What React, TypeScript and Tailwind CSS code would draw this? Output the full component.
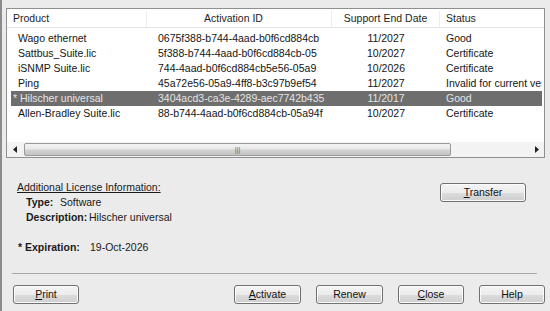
import React from "react";

const rows = [
  { p: "Wago ethernet", id: "0675f388-b744-4aad-b0f6cd884cb", d: "11/2027", s: "Good" },
  { p: "Sattbus_Suite.lic", id: "5f388-b744-4aad-b0f6cd884cb-05", d: "10/2027", s: "Certificate" },
  { p: "iSNMP Suite.lic", id: "744-4aad-b0f6cd884cb5e56-05a9", d: "10/2026", s: "Certificate" },
  { p: "Ping", id: "45a72e56-05a9-4ff8-b3c97b9ef54", d: "11/2027", s: "Invalid for current ver" },
  { p: "* Hilscher universal", id: "3404acd3-ca3e-4289-aec7742b435", d: "11/2017", s: "Good", sel: true },
  { p: "Allen-Bradley Suite.lic", id: "88-b744-4aad-b0f6cd884cb-05a94f", d: "10/2027", s: "Certificate" },
];

function Btn({ children, w }: { children: React.ReactNode; w: string }) {
  return (
    <div
      className={`${w} h-[19px] flex items-center justify-center rounded-[3px] border border-[#707070] bg-[linear-gradient(#f4f4f4_0%,#ececec_50%,#dcdcdc_51%,#cfcfcf_100%)] shadow-[inset_0_0_0_1px_#fbfbfb] text-[#111] text-[10.5px]`}
    >
      {children}
    </div>
  );
}

export default function App() {
  return (
    <div
      className="w-[550px] h-[311px] bg-[#ebebeb] border-l-2 border-[#8c8c8c] overflow-hidden text-[10px] text-[#1a1a1a]"
      style={{ fontFamily: '"Liberation Sans", Arial, sans-serif' }}
    >
      {/* list box */}
      <div className="mt-[8px] ml-[4px] w-[539px] h-[150px] border border-[#8e8f8f] bg-white flex flex-col">
        {/* header */}
        <div className="h-[19px] pt-[2px] flex items-center border-b border-[#e4e4e4] text-[#1e1e1e] text-[10.5px]">
          <div className="w-[140px] pl-[6px] border-r border-[#ececec] h-full flex items-center">Product</div>
          <div className="w-[185px] pl-[57px] border-r border-[#ececec] h-full flex items-center">Activation ID</div>
          <div className="w-[108px] border-r border-[#ececec] h-full flex items-center justify-center">Support End Date</div>
          <div className="flex-1 pl-[6px] h-full flex items-center">Status</div>
        </div>
        {/* rows */}
        <div className="flex-1 pt-[3px] pl-[4px] pr-[2px] flex flex-col">
          {rows.map((r) => (
            <div
              key={r.p}
              className={`h-[15px] flex items-center whitespace-nowrap overflow-hidden text-[10.5px] ${
                r.sel ? "bg-[#6e6e6e] text-[#e4e4e4]" : "text-[#151515]"
              }`}
            >
              <div className={`w-[136px] ${r.sel ? "pl-[2px]" : "pl-[7px]"}`}>{r.p}</div>
              <div className="w-[185px] pl-[11px]">{r.id}</div>
              <div className="w-[108px] text-center">{r.d}</div>
              <div className="flex-1 pl-[6px] overflow-hidden">{r.s}</div>
            </div>
          ))}
        </div>
        {/* scrollbar */}
        <div className="h-[15px] flex items-center bg-[#f3f3f3]">
          <div className="w-[15px] h-full flex items-center justify-center">
            <svg width="4" height="7" viewBox="0 0 4 7">
              <path d="M4 0 L0 3.5 L4 7 Z" fill="#222" />
            </svg>
          </div>
          <div className="ml-[2px] w-[427px] h-[13px] rounded-[2px] border border-[#9a9a9a] bg-[linear-gradient(#f4f4f4_0%,#e8e8e8_45%,#d2d2d2_55%,#c4c4c4_100%)] flex items-center justify-center">
            <span className="text-[7px] leading-none text-[#666]">|||</span>
          </div>
          <div className="flex-1" />
          <div className="w-[15px] h-full flex items-center justify-center">
            <svg width="4" height="7" viewBox="0 0 4 7">
              <path d="M0 0 L4 3.5 L0 7 Z" fill="#222" />
            </svg>
          </div>
        </div>
      </div>

      {/* info area */}
      <div className="mt-[23px] flex">
        <div className="ml-[15px] flex flex-col text-[10.5px]">
          <div className="h-[12px] leading-[12px] underline">Additional License Information:</div>
          <div className="mt-[3px] h-[12px] leading-[12px] pl-[9px] flex">
            <span className="font-bold w-[34px]">Type:</span>
            <span>Software</span>
          </div>
          <div className="mt-[3px] h-[12px] leading-[12px] pl-[9px] flex">
            <span className="font-bold w-[63px]">Description:</span>
            <span>Hilscher universal</span>
          </div>
          <div className="mt-[18px] h-[12px] leading-[12px] pl-[1px] flex">
            <span className="font-bold w-[72px]">* Expiration:</span>
            <span>19-Oct-2026</span>
          </div>
        </div>
        <div className="ml-auto mr-[24px] mt-[2px]">
          <Btn w="w-[86px]">
            <span>
              <u>T</u>ransfer
            </span>
          </Btn>
        </div>
      </div>

      {/* separator */}
      <div className="mt-[20px] ml-[10px] w-[525px] h-[1px] bg-[#a8a8a8]" />

      {/* buttons */}
      <div className="mt-[11px] ml-[11px] flex">
        <Btn w="w-[66px]">
          <span>
            <u>P</u>rint
          </span>
        </Btn>
        <div className="ml-[155px] flex gap-[15px]">
          <Btn w="w-[67px]">
            <span>
              <u>A</u>ctivate
            </span>
          </Btn>
          <Btn w="w-[67px]">Renew</Btn>
          <Btn w="w-[66px]">
            <span>
              <u>C</u>lose
            </span>
          </Btn>
          <Btn w="w-[66px]">Help</Btn>
        </div>
      </div>
    </div>
  );
}
